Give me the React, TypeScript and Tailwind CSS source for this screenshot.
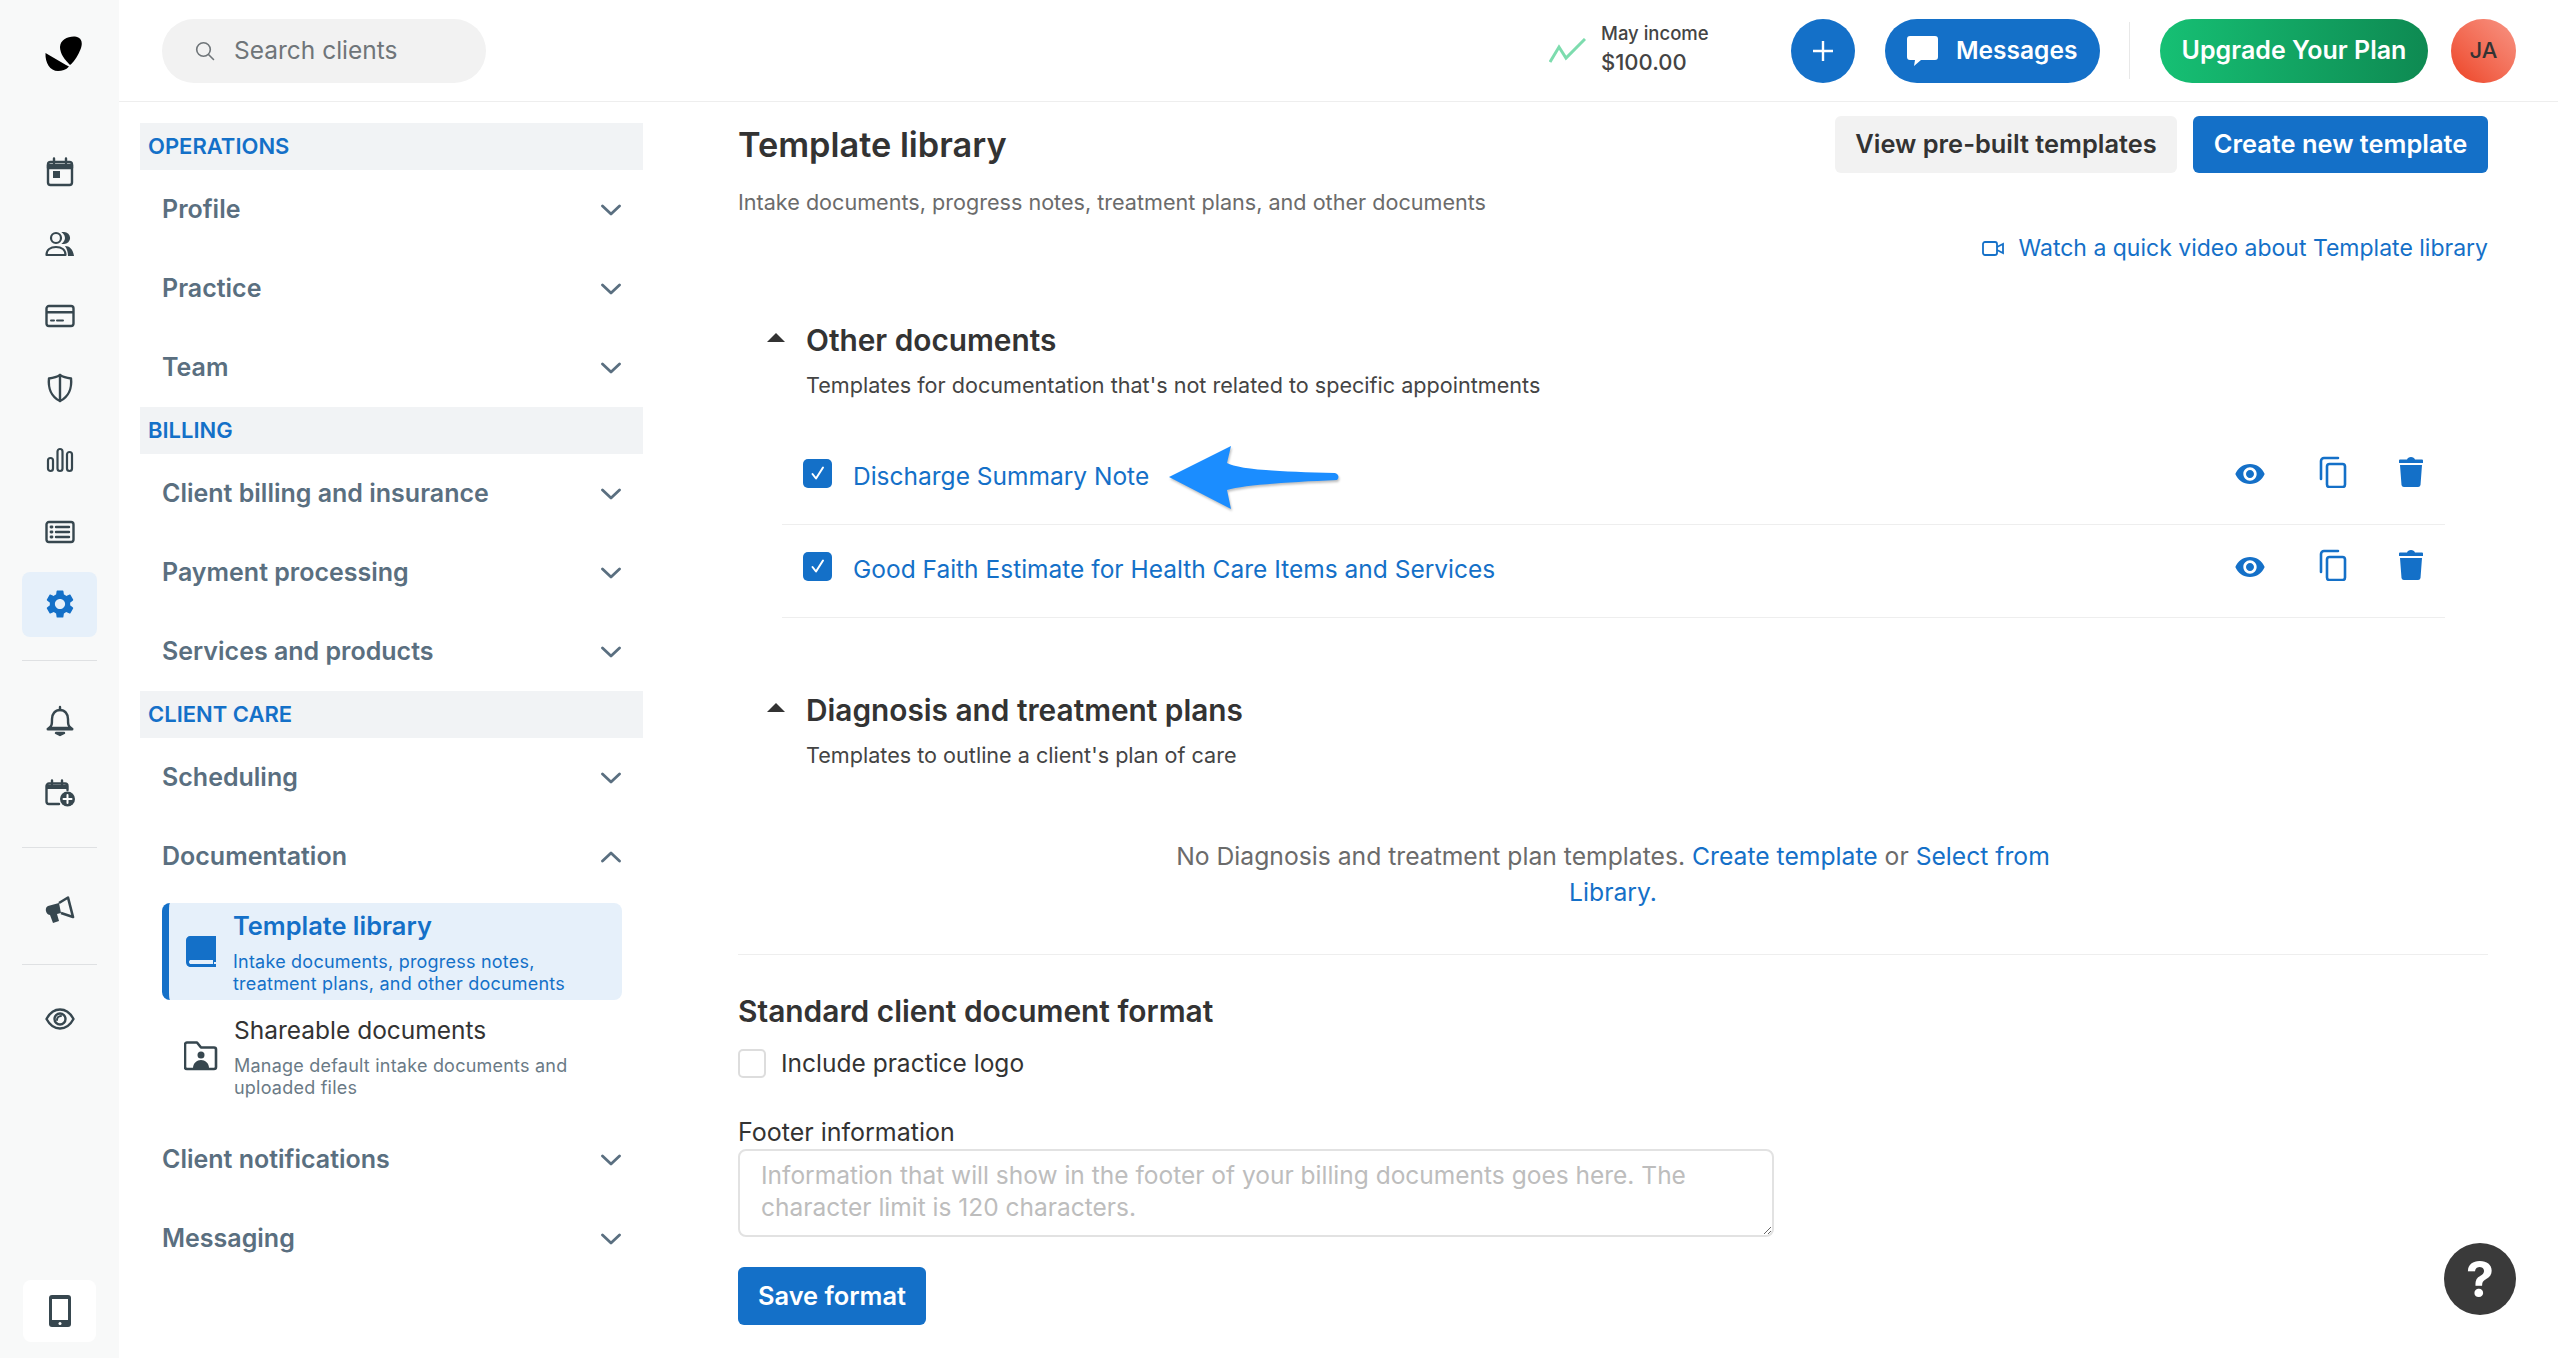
import React from "react";

const Chevron = ({ up = false }: { up?: boolean }) => (
  <svg width="20" height="12" viewBox="0 0 20 12" fill="none" stroke="currentColor" strokeWidth="2.8" strokeLinecap="round" strokeLinejoin="round" className="shrink-0 text-[#5a6f80]">
    {up ? <path d="M1.5 10 10 2l8.5 8" /> : <path d="M1.5 2 10 10l8.5-8" />}
  </svg>
);

const Row = ({ label, up = false }: { label: string; up?: boolean }) => (
  <div className="flex h-[79px] items-center justify-between pl-[22px] pr-[22px]">
    <span className="text-[25px] font-semibold text-[#5a6f80]">{label}</span>
    <Chevron up={up} />
  </div>
);

const Section = ({ label }: { label: string }) => (
  <div className="flex h-[47px] items-center bg-[#f1f3f5] pl-[8px] text-[22px] font-semibold text-[#1470c8]">{label}</div>
);

const RailSlot = ({ children }: { children: React.ReactNode }) => (
  <div className="flex h-[72px] w-full items-center justify-center text-[#37474f]">{children}</div>
);

const I = ({ children, w = 30, h = 30 }: { children: React.ReactNode; w?: number; h?: number }) => (
  <svg width={w} height={h} viewBox={`0 0 ${w} ${h}`} fill="none" stroke="currentColor" strokeWidth="2.4" strokeLinecap="round" strokeLinejoin="round">
    {children}
  </svg>
);

const EyeFilled = () => (
  <svg width="32" height="32" viewBox="0 0 24 24" fill="currentColor" className="mt-[4px] text-[#1470c8]">
    <path d="M12 4.5C7 4.5 2.73 7.61 1 12c1.73 4.39 6 7.5 11 7.5s9.27-3.11 11-7.5c-1.73-4.39-6-7.5-11-7.5zM12 17c-2.76 0-5-2.24-5-5s2.24-5 5-5 5 2.24 5 5-2.24 5-5 5zm0-8c-1.66 0-3 1.34-3 3s1.34 3 3 3 3-1.34 3-3-1.34-3-3-3z" />
  </svg>
);

const CopyIcon = () => (
  <svg width="30" height="32" viewBox="0 0 30 32" fill="none" stroke="currentColor" strokeWidth="2.6" strokeLinecap="round" strokeLinejoin="round" className="text-[#1470c8]">
    <path d="M20 2H6a3 3 0 0 0-3 3v18" />
    <rect x="9" y="8" width="18" height="23" rx="2.5" />
  </svg>
);

const TrashIcon = () => (
  <svg width="28" height="32" viewBox="0 0 28 32" fill="currentColor" className="text-[#1470c8]">
    <path d="M2 4.5a1 1 0 0 1 1-1h7C10.5 2 12 1 14 1s3.500 1 4 2.500h7a1 1 0 0 1 1 1V7H2z" />
    <path d="M3 9h22l-1.500 20a2.500 2.500 0 0 1-2.500 2H7a2.500 2.500 0 0 1-2.500-2z" />
  </svg>
);

const Check = ({ className }: { className: string }) => (
  <div className={`flex h-[29px] w-[29px] shrink-0 items-center justify-center rounded-[5px] bg-[#1470c8] ${className}`}>
    <svg width="16" height="16" viewBox="0 0 16 16" fill="none" stroke="white" strokeWidth="2" strokeLinecap="round" strokeLinejoin="round">
      <path d="M2.500 9 6 13.500 13 2.500" />
    </svg>
  </div>
);

const Triangle = () => (
  <svg width="18" height="9" viewBox="0 0 18 9" fill="#333333" className="mb-[6px] shrink-0">
    <path d="M9 0 18 9H0z" />
  </svg>
);

const Actions = () => (
  <div className="mb-[13px] ml-auto flex items-center pr-[20px]">
    <EyeFilled />
    <div className="ml-[52px]"><CopyIcon /></div>
    <div className="ml-[49px]"><TrashIcon /></div>
  </div>
);

export default function App() {
  return (
    <div className="relative flex h-[1358px] w-full overflow-hidden bg-white font-['Inter',sans-serif] text-[#333333]">
      {/* Rail */}
      <aside className="flex h-full w-[119px] shrink-0 flex-col items-center bg-[#f8f9f9] pt-[34px]">
        <svg width="40" height="40" viewBox="0 0 40 40" fill="#000" className="ml-[8px] mb-[62px] shrink-0">
          <path d="M16 13C16 6 24 2 31 2.500C37 3 39 8 37 14C35 20 30 28 26 31C21 26 16 20 16 13Z" />
          <path d="M1.500 19 22 31l3 1.500C22 36 18 37 14 37 6 37 1 29 1.500 19Z" />
        </svg>
        <RailSlot>
          <I>
            <rect x="3" y="5" width="24" height="23" rx="2.500" />
            <path d="M3 8h24v3H3z" fill="currentColor" />
            <path d="M9 1.500V6M21 1.500V6" />
            <rect x="8" y="14" width="7" height="7" fill="currentColor" stroke="none" />
          </I>
        </RailSlot>
        <RailSlot>
          <svg width="30" height="26" viewBox="0 0 30 26" fill="none" stroke="currentColor" strokeWidth="2.200">
            <circle cx="11" cy="7" r="5" />
            <path d="M19 2a5 5 0 0 1 0 10 7 7 0 0 0 0-10z" fill="currentColor" />
            <path d="M1.500 24c0-5 4-8 9.500-8s9.500 3 9.500 8z" strokeLinejoin="round" />
            <path d="M20 15c4.500 0 8 3 9 10h-6c0-4-1-7-3-10z" fill="currentColor" stroke="none" />
          </svg>
        </RailSlot>
        <RailSlot>
          <I h={24}>
            <rect x="1.500" y="2" width="27" height="20" rx="2.500" />
            <path d="M1.500 7h27v2.500h-27z" fill="currentColor" stroke="none" />
            <path d="M6 16.500h3M12 16.500h6" strokeWidth="2" />
          </I>
        </RailSlot>
        <RailSlot>
          <I>
            <path d="M15 2c3 2 7 3 11 3.500 1 9-2 18-11 22.500C6 23.500 3 14.500 4 5.500 8 5 12 4 15 2z" />
            <path d="M15 2v26" />
          </I>
        </RailSlot>
        <RailSlot>
          <svg width="28" height="26" viewBox="0 0 28 26" fill="none" stroke="currentColor" strokeWidth="2.200">
            <rect x="2" y="11" width="5" height="13" rx="2.500" />
            <rect x="11.500" y="2" width="5" height="22" rx="2.500" />
            <rect x="21" y="5" width="5" height="19" rx="2.500" />
          </svg>
        </RailSlot>
        <RailSlot>
          <I h={24}>
            <rect x="1.500" y="2" width="27" height="20" rx="2.500" />
            <path d="M11 7h13M11 12h13M11 17h13" />
            <path d="M6 7h1M6 12h1M6 17h1" strokeWidth="2.800" />
          </I>
        </RailSlot>
        <div className="flex h-[65px] w-[75px] shrink-0 my-[3.5px] items-center justify-center rounded-[8px] bg-[#e6f0fa]">
          <svg width="34" height="34" viewBox="0 0 24 24" fill="#1470c8">
            <path d="M19.140 12.940c.04-.3.06-.61.06-.94 0-.32-.02-.64-.07-.94l2.030-1.580c.18-.14.23-.41.12-.61l-1.920-3.320c-.12-.22-.37-.29-.59-.22l-2.390.96c-.5-.38-1.030-.7-1.620-.94l-.36-2.540c-.04-.24-.24-.41-.48-.41h-3.840c-.24 0-.43.17-.47.41l-.36 2.540c-.59.24-1.130.57-1.620.94l-2.390-.96c-.22-.08-.47 0-.59.22L2.740 8.870c-.12.21-.08.47.12.61l2.030 1.580c-.05.3-.09.63-.09.94s.02.64.07.94l-2.030 1.580c-.18.14-.23.41-.12.61l1.920 3.320c.12.22.37.29.59.22l2.390-.96c.5.38 1.030.7 1.620.94l.36 2.540c.05.24.24.41.48.41h3.840c.24 0 .44-.17.47-.41l.36-2.540c.59-.24 1.130-.56 1.620-.94l2.390.96c.22.08.47 0 .59-.22l1.920-3.320c.12-.22.07-.47-.12-.61l-2.010-1.580zM12 15.600c-1.980 0-3.600-1.620-3.600-3.600s1.620-3.600 3.600-3.600 3.600 1.620 3.600 3.600-1.620 3.600-3.600 3.600z" />
          </svg>
        </div>
        <div className="mt-[20px] mb-[24px] h-px w-[75px] shrink-0 bg-[#dfe1e3]" />
        <RailSlot>
          <I h={32}>
            <path d="M15 2v3" />
            <path d="M4 23c3-2 3-4 3-9s3-9 8-9 8 4 8 9 0 7 3 9z" />
            <path d="M3 24h24" strokeWidth="3" />
            <path d="M11 28h8l-4 2z" fill="currentColor" />
          </I>
        </RailSlot>
        <RailSlot>
          <svg width="30" height="28" viewBox="0 0 30 28" fill="none" stroke="currentColor" strokeWidth="2.400" strokeLinecap="round">
            <path d="M14 25H4a2.500 2.500 0 0 1-2.500-2.500V7A2.500 2.500 0 0 1 4 4.500h16A2.500 2.500 0 0 1 22.500 7v4" />
            <path d="M1.500 6h21v4h-21z" fill="currentColor" stroke="none" />
            <path d="M7 1.500V5M17 1.500V5" />
            <circle cx="22.500" cy="20" r="7.500" fill="currentColor" stroke="none" />
            <path d="M22.500 16v8M18.500 20h8" stroke="white" strokeWidth="2" />
          </svg>
        </RailSlot>
        <div className="mt-[18px] mb-[26px] h-px w-[75px] shrink-0 bg-[#dfe1e3]" />
        <RailSlot>
          <svg width="30" height="28" viewBox="0 0 30 28" fill="none">
            <path d="M3 10 14 7l2 10-4 1 2 7-6 2-3-8C1 19-1 12 3 10Z" fill="currentColor" />
            <path d="M14 7l9-5.500L28 21l-12-4" stroke="currentColor" strokeWidth="2.600" strokeLinejoin="round" />
          </svg>
        </RailSlot>
        <div className="mt-[18px] mb-[18px] h-px w-[75px] shrink-0 bg-[#dfe1e3]" />
        <RailSlot>
          <I h={24}>
            <path d="M1.500 12C5 5.500 10 2.500 15 2.500S25 5.500 28.500 12C25 18.500 20 21.500 15 21.500S5 18.500 1.500 12z" />
            <circle cx="15" cy="12" r="5.500" />
            <path d="M12 13c0-2 1.500-4 4-4" strokeWidth="2" />
          </I>
        </RailSlot>
        <div className="mt-auto mb-[16px] flex h-[62px] w-[73px] shrink-0 items-center justify-center rounded-[8px] bg-white text-[#37474f]">
          <svg width="22" height="32" viewBox="0 0 22 32">
            <rect width="22" height="32" rx="3" fill="currentColor" />
            <rect x="3" y="4" width="16" height="21" fill="white" />
            <circle cx="11" cy="28.500" r="1.500" fill="white" />
          </svg>
        </div>
      </aside>

      <div className="flex min-w-0 flex-1 flex-col">
        {/* Header */}
        <header className="flex h-[102px] shrink-0 items-center border-b border-[#eeeeee] pl-[43px] pr-[42px]">
          <div className="flex h-[64px] w-[324px] items-center rounded-full bg-[#f2f2f2] pl-[33px] text-[24.500px] text-[#6f7579]">
            <svg width="20" height="20" viewBox="0 0 20 20" fill="none" stroke="#6f7579" strokeWidth="1.600" strokeLinecap="round" className="mr-[19px] shrink-0">
              <circle cx="8.500" cy="8.500" r="6.800" />
              <path d="m13.500 13.500 5 5" />
            </svg>
            Search clients
          </div>
          <div className="ml-auto flex items-center">
            <svg width="37" height="26" viewBox="0 0 37 26" fill="none" stroke="#7ddcae" strokeWidth="3" className="mr-[15px]">
              <path d="M1 24 10 9l7 11L36 1" />
            </svg>
            <div className="mb-[6px] w-[190px]">
              <div className="text-[18.5px] leading-[29px] font-medium text-[#444444]">May income</div>
              <div className="text-[22px] leading-[29px] font-medium text-[#444444]">$100.00</div>
            </div>
            <div className="flex h-[64px] w-[64px] items-center justify-center rounded-full bg-[#1470c8]">
              <svg width="22" height="22" viewBox="0 0 22 22" stroke="white" strokeWidth="2.400">
                <path d="M11 1v20M1 11h20" />
              </svg>
            </div>
            <div className="ml-[30px] flex h-[64px] w-[215px] items-center rounded-full bg-[#1470c8] pl-[22px] text-[24.5px] font-semibold text-white">
              <svg width="31" height="32" viewBox="0 0 31 32" fill="white" className="mr-[18px] shrink-0">
                <path d="M3 1h25a3 3 0 0 1 3 3v18a3 3 0 0 1-3 3H14l-7 6 1-6H3a3 3 0 0 1-3-3V4a3 3 0 0 1 3-3z" />
              </svg>
              Messages
            </div>
            <div className="ml-[29px] h-[57px] w-px bg-[#e8e8e8]" />
            <div className="ml-[30px] flex h-[64px] w-[268px] items-center justify-center rounded-full bg-gradient-to-r from-[#16c074] to-[#0e8a52] text-[25px] font-semibold text-white">Upgrade Your Plan</div>
            <div className="ml-[23px] flex h-[64px] w-[65px] items-center justify-center rounded-full bg-gradient-to-tr from-[#ec3f1f] to-[#f79484] text-[22px] font-medium text-[#333333]">JA</div>
          </div>
        </header>

        <div className="flex min-h-0 flex-1">
          {/* Sidebar */}
          <nav className="w-[524px] shrink-0 pl-[21px] pt-[21px]">
            <Section label="OPERATIONS" />
            <Row label="Profile" />
            <Row label="Practice" />
            <Row label="Team" />
            <Section label="BILLING" />
            <Row label="Client billing and insurance" />
            <Row label="Payment processing" />
            <Row label="Services and products" />
            <Section label="CLIENT CARE" />
            <Row label="Scheduling" />
            <Row label="Documentation" up />
            <div className="ml-[22px] mr-[21px] mt-[7px] flex h-[97px] items-center overflow-hidden rounded-[8px] border-l-[7px] border-[#1470c8] bg-[#e6f0fa]">
              <svg width="30" height="32" viewBox="0 0 30 32" fill="#1470c8" className="ml-[17px] mr-[17px] shrink-0">
                <path d="M4 0h26v26h-2v2h2v3H5c-3 0-5-2-5-5V4c0-2 2-4 4-4zm1 24c-1 0-2 .5-2 2s1 2 2 2h22v-4z" fillRule="evenodd" />
              </svg>
              <div>
                <div className="text-[25.400px] leading-[36px] font-semibold text-[#1470c8]">Template library</div>
                <div className="mt-[7px] text-[18px] leading-[22px] tracking-[0.22px] text-[#1470c8]">Intake documents, progress notes,<br />treatment plans, and other documents</div>
              </div>
            </div>
            <div className="ml-[22px] mr-[21px] mt-[7px] mb-[16px] flex h-[97px] items-center">
              <svg width="34" height="30" viewBox="0 0 34 30" fill="none" stroke="#37474f" strokeWidth="2.600" strokeLinejoin="round" className="ml-[22px] mr-[16px] shrink-0">
                <path d="M3 1.500h10l4 5h13a2 2 0 0 1 2 2V26a2 2 0 0 1-2 2H3a2 2 0 0 1-2-2V3.500a2 2 0 0 1 2-2z" />
                <circle cx="17" cy="14" r="3.500" fill="#37474f" stroke="none" />
                <path d="M9 27c0-5 4-8 8-8s8 3 8 8z" fill="#37474f" stroke="none" />
              </svg>
              <div>
                <div className="text-[24.500px] leading-[36px] text-[#333333]">Shareable documents</div>
                <div className="mt-[7px] text-[18px] leading-[22px] tracking-[0.22px] text-[#6a7a86]">Manage default intake documents and<br />uploaded files</div>
              </div>
            </div>
            <Row label="Client notifications" />
            <Row label="Messaging" />
          </nav>

          {/* Main */}
          <main className="min-w-0 flex-1 pl-[95px] pr-[70px] pt-[14px]">
            <div className="flex h-[57px] items-center justify-between">
              <h1 className="text-[34.300px] font-semibold text-[#333333]">Template library</h1>
              <div className="flex gap-[16px] text-[25.400px] font-semibold">
                <div className="flex h-[57px] w-[342px] items-center justify-center rounded-[6px] bg-[#f2f2f2] text-[#333333]">View pre-built templates</div>
                <div className="flex h-[57px] w-[295px] items-center justify-center rounded-[6px] bg-[#1470c8] text-white">Create new template</div>
              </div>
            </div>
            <p className="mt-[13px] h-[33px] text-[21.600px] leading-[32px] text-[#6b6b6b]">Intake documents, progress notes, treatment plans, and other documents</p>
            <div className="mt-[13px] flex h-[32px] items-center justify-end text-[23px] text-[#1470c8]">
              <svg width="22" height="15" viewBox="0 0 22 15" fill="none" stroke="#1470c8" strokeWidth="1.800" className="mr-[14px]">
                <rect x="1" y="1" width="14" height="13" rx="2" />
                <path d="m15 6 6-3v9l-6-3" />
              </svg>
              Watch a quick video about Template library
            </div>

            <div className="mt-[56px] flex h-[40px] items-center pl-[29px]">
              <Triangle />
              <h2 className="ml-[21px] text-[29.800px] font-semibold text-[#333333]">Other documents</h2>
            </div>
            <p className="mt-[9px] h-[33px] pl-[68px] text-[21.600px] leading-[32px] text-[#444444]">Templates for documentation that's not related to specific appointments</p>

            <div className="ml-[44px] mr-[43px] mt-[30px]">
              <div className="flex h-[93px] items-center border-b border-[#eeeeee] pl-[21px]">
                <Check className="mb-[10px]" />
                <span className="mb-[3px] ml-[21px] text-[24.500px] text-[#1470c8]">Discharge Summary Note</span>
                <svg width="172" height="64" viewBox="0 0 172 64" fill="#1b8dff" className="ml-[20px] drop-shadow-[1px_2px_1px_rgba(0,0,0,0.25)]">
                  <path d="M0 31 62 0l-4 17c10 6 50 9 108 10a4 4 0 0 1 2 7C120 36 75 39 58 44l4 19z" />
                </svg>
                <Actions />
              </div>
              <div className="flex h-[93px] items-center border-b border-[#eeeeee] pl-[21px]">
                <Check className="mb-[10px]" />
                <span className="mb-[3px] ml-[21px] text-[24.500px] text-[#1470c8]">Good Faith Estimate for Health Care Items and Services</span>
                <Actions />
              </div>
            </div>

            <div className="mt-[72px] flex h-[40px] items-center pl-[29px]">
              <Triangle />
              <h2 className="ml-[21px] text-[29.800px] font-semibold text-[#333333]">Diagnosis and treatment plans</h2>
            </div>
            <p className="mt-[9px] h-[32px] pl-[68px] text-[21.600px] leading-[32px] text-[#444444]">Templates to outline a client's plan of care</p>

            <div className="mt-[67px] text-center text-[24.700px] leading-[36px] text-[#6b6b6b]">
              <p>No Diagnosis and treatment plan templates. <a className="text-[#1470c8]">Create template</a> or <a className="text-[#1470c8]">Select from</a></p>
              <p className="text-[#1470c8]">Library.</p>
            </div>

            <div className="mt-[44px] h-px bg-[#eeeeee]" />

            <h2 className="mt-[36px] flex h-[40px] items-center text-[29.900px] font-semibold text-[#333333]">Standard client document format</h2>
            <div className="mt-[17px] flex h-[30px] items-center">
              <div className="h-[29px] w-[28px] rounded-[5px] border-2 border-[#dddddd]" />
              <span className="ml-[15px] text-[24.500px] text-[#333333]">Include practice logo</span>
            </div>
            <div className="mt-[38px] flex h-[33px] items-center text-[25px] text-[#333333]">Footer information</div>
            <textarea
              className="block h-[88px] w-[1036px] rounded-[8px] border-2 border-[#e2e2e2] px-[21px] py-[8px] text-[24.500px] leading-[32px] placeholder:text-[#bdbdbd]"
              placeholder="Information that will show in the footer of your billing documents goes here. The character limit is 120 characters."
            />
            <button className="mt-[30px] flex h-[58px] w-[188px] items-center justify-center rounded-[6px] bg-[#1470c8] text-[25.400px] font-semibold text-white">Save format</button>
          </main>
        </div>
      </div>

      <div className="absolute bottom-[43px] right-[42px] flex h-[72px] w-[72px] items-center justify-center rounded-full bg-[#3a3a3a] text-[50px] font-bold text-white">?</div>
    </div>
  );
}
